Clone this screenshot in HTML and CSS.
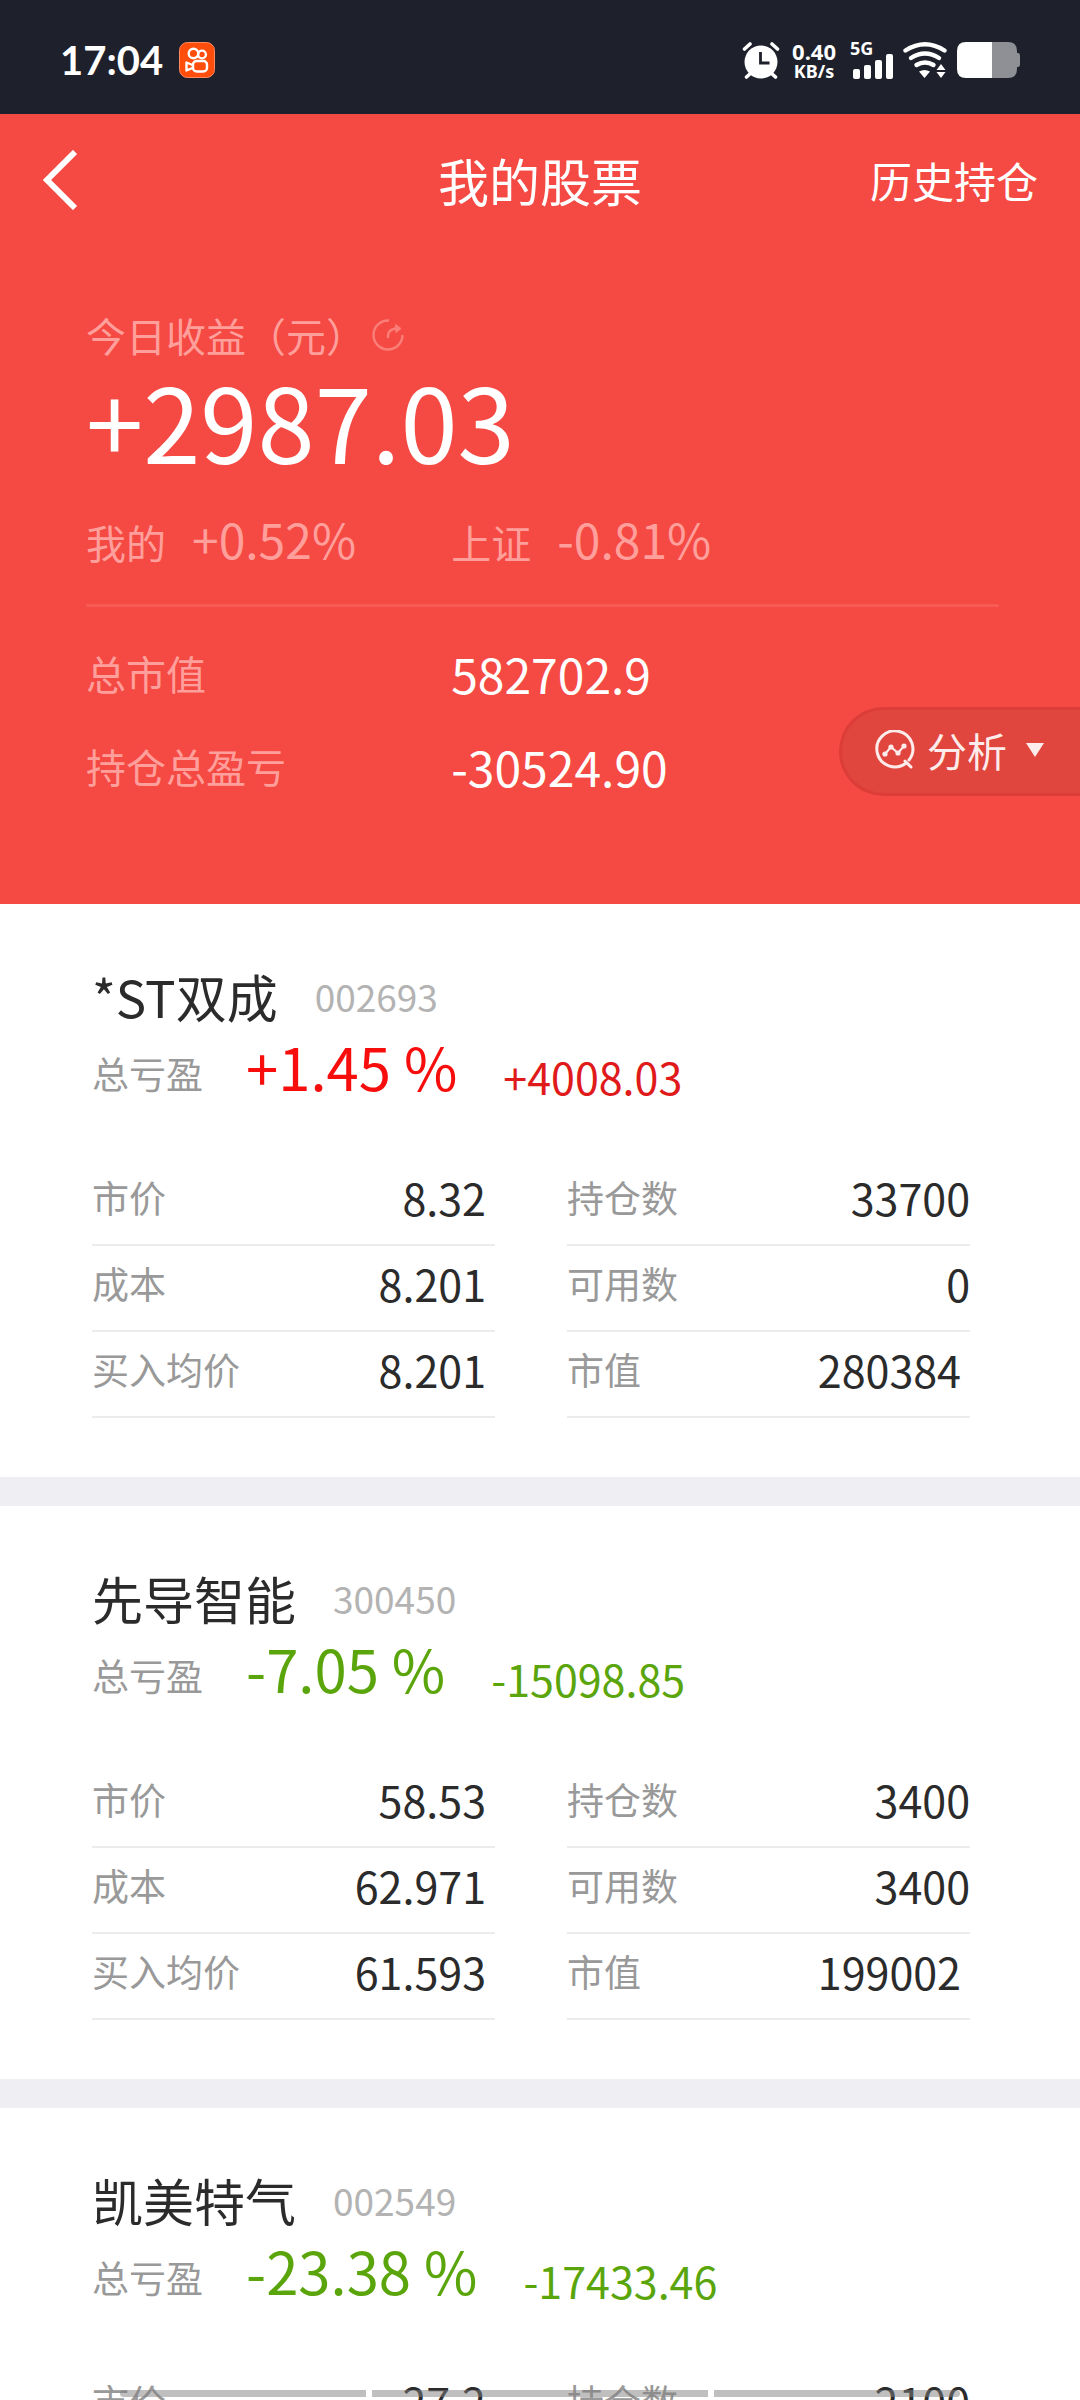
FILE: index.html
```html
<!DOCTYPE html>
<html lang="zh-CN">
<head>
<meta charset="utf-8">
<meta name="viewport" content="width=device-width, initial-scale=1">
<title>我的股票</title>
<link rel="stylesheet" href="styles.css">
</head>
<body>
<div class="screen">
  <div class="status">
    <time class="status-time">17:04</time>
    <svg class="app-icon" width="36" height="36" viewBox="0 0 36 36" aria-hidden="true">
      <rect x="0.5" y="0.5" width="35" height="35" rx="8" fill="#ff4d0c" stroke="#ff8a60"/>
      <g fill="none" stroke="#fff" stroke-width="2.4" stroke-linejoin="round">
        <circle cx="14.500" cy="11.500" r="4.800"/><circle cx="23" cy="12.500" r="3.900"/>
        <rect x="14" y="19" width="14" height="10.500" rx="3.600"/>
        <path d="M13.500 23 7.500 20.500v8l6-2.500"/>
      </g>
    </svg>
    <div class="status-right">
      <svg width="38" height="38" viewBox="0 0 38 38" aria-hidden="true">
        <circle cx="19" cy="21" r="16.500" fill="#fff"/>
        <path d="M2.500 8 8 3M35.500 8 30 3M9 32l-4.500 4M29 32l4.500 4" stroke="#fff" stroke-width="3.600" stroke-linecap="round"/>
        <path d="M18.500 11v11h9" fill="none" stroke="#1e212b" stroke-width="2.800"/>
      </svg>
      <div class="speed"><span class="speed-value">0.40</span><span>KB/s</span></div>
      <div class="signal">
        <span class="net">5G</span>
        <svg width="42" height="26" viewBox="0 0 42 26" fill="#fff" aria-hidden="true">
          <rect x="1" y="16" width="7" height="10" rx="2"/><rect x="12" y="12" width="7" height="14" rx="2"/><rect x="23" y="7" width="7" height="19" rx="2"/><rect x="34" y="1" width="7" height="25" rx="2"/>
        </svg>
      </div>
      <svg width="46" height="38" viewBox="0 0 46 38" aria-hidden="true">
        <g fill="none" stroke="#fff" stroke-width="4.400" stroke-linecap="round"><path d="M3.500 9.500Q23-3 42.500 9.500"/><path d="M9 17Q23 8 37 17"/><path d="M14.500 24Q23 19 31.500 24"/></g>
        <path d="M17 30.500Q22.500 27.500 28 30.500L22.500 37z M39 23l4.500 6h-9z M39 37l4.500-6h-9z" fill="#fff"/>
      </svg>
      <svg width="64" height="36" viewBox="0 0 64 36" aria-hidden="true">
        <path d="M36 0h16q9 0 9 9v2h1q2 0 2 3v8q0 3-2 3h-1v2q0 9-9 9H36z" fill="#8f9095"/>
        <path d="M10 0h26v36H10q-9 0-9-9V9q0-9 9-9z" fill="#fff"/>
      </svg>
    </div>
  </div>

  <header class="summary">
    <nav class="navbar">
      <button class="back" type="button" aria-label="返回">
        <svg width="36" height="60" viewBox="0 0 36 60" fill="none" stroke="#fff" stroke-width="6"><path d="M33 2 5 30l28 28"/></svg>
      </button>
      <h1 class="title">我的股票</h1>
      <a class="history" href="#history">历史持仓</a>
    </nav>

    <div class="overview">
      <div class="today">
        <span class="faint">今日收益（元）</span>
        <svg width="32" height="32" viewBox="0 0 32 32" fill="none" stroke="#fb7f79" stroke-width="2.400" aria-hidden="true"><path d="M17 1.500A14.500 14.500 0 1 0 30.500 16M16 19q-1-9 9-9.500"/><path d="M23.500 5.500 29 9.500l-5 4z" fill="#fb7f79" stroke-width="1"/></svg>
      </div>
      <div class="today-amount">+2987.03</div>
      <div class="compare">
        <div class="compare-item"><span>我的</span><span class="rate">+0.52%</span></div>
        <div class="compare-item"><span>上证</span><span class="rate">-0.81%</span></div>
      </div>
      <dl class="totals">
        <div class="total"><dt>总市值</dt><dd>582702.9</dd></div>
        <div class="total"><dt>持仓总盈亏</dt><dd>-30524.90</dd></div>
      </dl>
    </div>

    <button class="analysis" type="button">
      <svg width="40" height="40" viewBox="0 0 40 40" fill="none" stroke="#fdeceb" stroke-width="3" stroke-linecap="round" aria-hidden="true"><path d="M31 33A18 18 0 1 1 34 30M30 31l6 6"/><path d="M10 24l6-7 7 6 6-7" stroke-width="2"/><g fill="#fdeceb" stroke="none"><circle cx="10" cy="24" r="2.600"/><circle cx="16" cy="17" r="2.600"/><circle cx="23" cy="23" r="2.600"/><circle cx="29" cy="16" r="2.600"/></g></svg>
      <span>分析</span>
      <svg width="20" height="16" viewBox="0 0 20 16" fill="#fdeceb" aria-hidden="true"><path d="M1 1h18l-9 14z"/></svg>
    </button>
  </header>

  <main class="holdings">
    <section class="holding">
      <div class="name-row"><h2 class="name">*ST双成</h2><span class="code">002693</span></div>
      <div class="profit gain"><span class="profit-label">总亏盈</span><span class="percent">+1.45 %</span><span class="amount">+4008.03</span></div>
      <dl class="figures">
        <div class="figure inset"><dt>市价</dt><dd>8.32</dd></div>
        <div class="figure"><dt>持仓数</dt><dd>33700</dd></div>
        <div class="figure inset"><dt>成本</dt><dd>8.201</dd></div>
        <div class="figure"><dt>可用数</dt><dd>0</dd></div>
        <div class="figure inset"><dt>买入均价</dt><dd>8.201</dd></div>
        <div class="figure inset"><dt>市值</dt><dd>280384</dd></div>
      </dl>
    </section>
    <section class="holding">
      <div class="name-row"><h2 class="name">先导智能</h2><span class="code">300450</span></div>
      <div class="profit loss"><span class="profit-label">总亏盈</span><span class="percent">-7.05 %</span><span class="amount">-15098.85</span></div>
      <dl class="figures">
        <div class="figure inset"><dt>市价</dt><dd>58.53</dd></div>
        <div class="figure"><dt>持仓数</dt><dd>3400</dd></div>
        <div class="figure inset"><dt>成本</dt><dd>62.971</dd></div>
        <div class="figure"><dt>可用数</dt><dd>3400</dd></div>
        <div class="figure inset"><dt>买入均价</dt><dd>61.593</dd></div>
        <div class="figure inset"><dt>市值</dt><dd>199002</dd></div>
      </dl>
    </section>
    <section class="holding">
      <div class="name-row"><h2 class="name">凯美特气</h2><span class="code">002549</span></div>
      <div class="profit loss"><span class="profit-label">总亏盈</span><span class="percent">-23.38 %</span><span class="amount">-17433.46</span></div>
      <dl class="figures">
        <div class="figure inset"><dt>市价</dt><dd>27.2</dd></div>
        <div class="figure"><dt>持仓数</dt><dd>2100</dd></div>
      </dl>
    </section>
  </main>
  <div class="gesture-bars" aria-hidden="true"><span></span><span class="wide"></span><span></span></div>
</div>
</body>
</html>
```
FILE: styles.css
```css
* { box-sizing: border-box; }

body,
h1,
h2,
dl,
dd { margin: 0; }

body {
  background: #fff;
  color: #2b2b2b;
  font-family: "Noto Sans CJK SC", sans-serif;
}

button {
  border: 0;
  padding: 0;
  background: none;
  color: inherit;
  font: inherit;
}

svg { display: block; flex: none; }

.screen {
  position: relative;
  display: flex;
  flex-direction: column;
  height: 100vh;
  overflow: hidden;
}

/* Status bar */
.status {
  display: flex;
  align-items: center;
  flex: none;
  height: 114px;
  padding: 6px 60px 0;
  background: #1e212b;
  color: #fff;
}

.status-time {
  font-family: Lato, sans-serif;
  font-size: 40px;
  font-weight: 700;
  line-height: 48px;
}

.app-icon { margin-left: 16px; }

.status-right {
  display: flex;
  align-items: center;
  gap: 8px;
  margin-left: auto;
}

.speed {
  display: flex;
  flex-direction: column;
  align-items: center;
  margin: 0 8px 0 4px;
  font: 700 18px/18px "Noto Sans", sans-serif;
}

.speed-value {
  font-size: 22px;
  line-height: 22px;
}

.signal {
  position: relative;
  padding-top: 12px;
}

.net {
  position: absolute;
  top: -2px;
  left: -2px;
  font: 700 18px/18px "Noto Sans", sans-serif;
}

/* Account summary */
.summary {
  position: relative;
  flex: none;
  background: #f54943;
  color: #fff;
}

.navbar {
  display: grid;
  grid-template-columns: 1fr auto 1fr;
  align-items: center;
  height: 132px;
  padding: 0 42px;
}

.back { justify-self: start; }

.title {
  font-size: 51px;
  font-weight: 400;
  line-height: 64px;
}

.history {
  justify-self: end;
  color: #fff;
  font-size: 42px;
  line-height: 64px;
  text-decoration: none;
}

.overview { padding: 59px 81px 92px 86px; }

.faint,
.compare,
.total dt { color: #ff9f9b; }

.today {
  display: flex;
  align-items: center;
  gap: 6px;
  font-size: 40px;
  line-height: 60px;
}

.today-amount {
  font-size: 103px;
  line-height: 110px;
}

.compare {
  display: grid;
  grid-template-columns: 2fr 3fr;
  align-items: center;
  height: 132px;
  border-bottom: 3px solid #f85a54;
  font-size: 40px;
  line-height: 60px;
}

.compare-item {
  display: flex;
  align-items: baseline;
  gap: 26px;
}

.rate { font-size: 48px; }

.totals { padding-top: 19px; }

.total {
  display: grid;
  grid-template-columns: 2fr 3fr;
  align-items: center;
  height: 93px;
  font-size: 40px;
}

.total dd { font-size: 48px; }

.analysis {
  position: absolute;
  right: 0;
  bottom: 108px;
  display: flex;
  align-items: center;
  height: 89px;
  padding: 0 35px 4px 33px;
  border: 3px solid #dc3d38;
  border-right: 0;
  border-radius: 45px 0 0 45px;
  background: #e0463e;
  color: #fdeceb;
  font-size: 40px;
  line-height: 60px;
}

.analysis span { margin: 0 18px 0 12px; }

/* Holdings */
.holdings { flex: none; }

.holding {
  padding: 58px 110px 59px 92px;
  border-bottom: 29px solid #efeef3;
}

.name-row {
  display: flex;
  align-items: center;
  gap: 37px;
  height: 68px;
}

.name {
  font-size: 51px;
  font-weight: 400;
}

.code {
  color: #b3b3b3;
  font-size: 37px;
}

.profit {
  display: flex;
  align-items: flex-end;
}

.profit-label {
  margin-right: 43px;
  color: #999;
  font-size: 37px;
  line-height: 58px;
}

.percent {
  margin-right: 46px;
  font-size: 58px;
  line-height: 72px;
}

.amount {
  font-size: 43px;
  line-height: 52px;
}

.gain .percent { color: #f80d0d; }
.gain .amount { color: #e01a1a; }
.loss .percent,
.loss .amount { color: #5ba50c; }

.figures {
  display: grid;
  grid-template-columns: 1fr 1fr;
  column-gap: 72px;
  margin-top: 58px;
}

.figure {
  display: flex;
  align-items: center;
  justify-content: space-between;
  height: 86px;
  padding-bottom: 10px;
  border-bottom: 2px solid #ececec;
}

.figure dt {
  color: #999;
  font-size: 37px;
}

.figure dd { font-size: 43px; }

.inset dd { padding-right: 9px; }

/* System gesture hint, laid over the list */
.gesture-bars {
  position: absolute;
  right: 120px;
  bottom: 3px;
  left: 120px;
  display: flex;
  gap: 6px;
  height: 7px;
}

.gesture-bars span {
  flex: 246;
  background: rgb(128 128 128 / 50%);
}

.gesture-bars .wide { flex: 336; }

.gesture-bars span:first-child { border-radius: 4px 0 0 4px; }
.gesture-bars span:last-child { border-radius: 0 4px 4px 0; }
```
